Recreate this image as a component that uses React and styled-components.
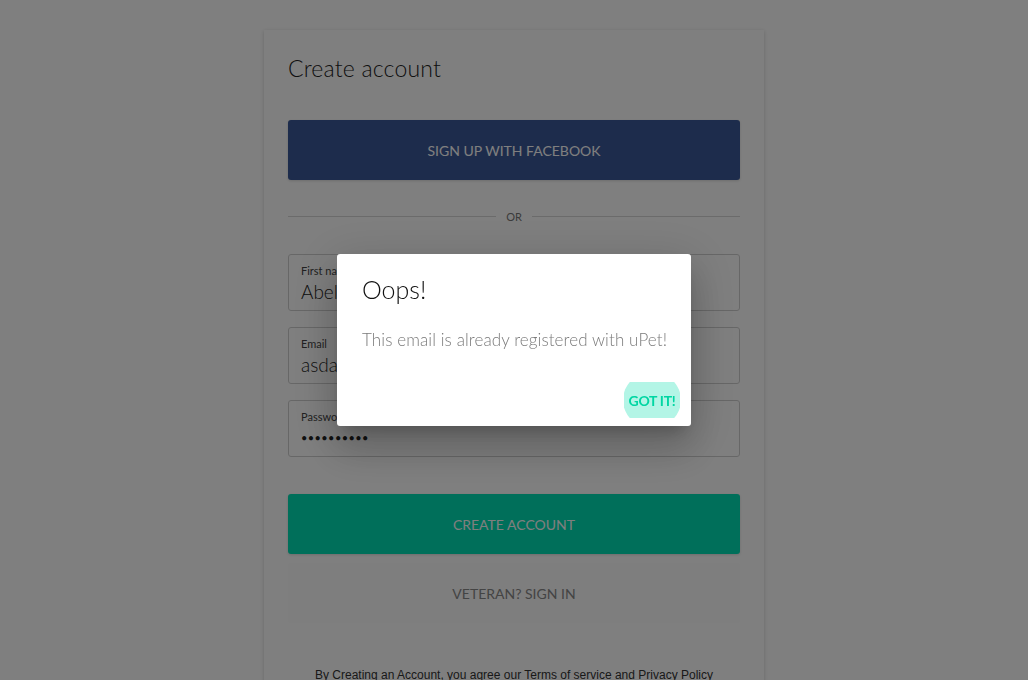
import React from 'react'
import styled, { createGlobalStyle } from 'styled-components'

const GlobalStyle = createGlobalStyle`
  html, body {
    margin: 0;
    padding: 0;
    background: #ffffff;
    font-family: Lato, "Open Sans", sans-serif;
  }
  * { box-sizing: border-box; }
`

const Page = styled.div`
  min-height: 680px;
  padding-top: 30px;
`

const Card = styled.section`
  width: 500px;
  margin: 0 auto;
  padding: 24px 24px 0;
  background: #ffffff;
  box-shadow: 0 1px 4px rgba(0, 0, 0, 0.18);
  min-height: 660px;
`

const Title = styled.h2`
  margin: 0 0 38px;
  font-size: 23px;
  line-height: 28px;
  font-weight: 300;
  color: #222;
  letter-spacing: 0.2px;
`

const BigButton = styled.button`
  display: flex;
  align-items: center;
  justify-content: center;
  width: 100%;
  height: 60px;
  border: 0;
  border-radius: 3px;
  background: ${({ bg }) => bg || 'transparent'};
  color: ${({ fg }) => fg || '#fff'};
  font-family: Lato, sans-serif;
  font-size: 14px;
  font-weight: 400;
  margin-top: ${({ mt }) => mt || 0}px;
  box-shadow: ${({ flat }) => (flat ? 'none' : '0 1px 3px rgba(0,0,0,0.15)')};
`

const Divider = styled.div`
  display: flex;
  align-items: center;
  gap: 10px;
  margin: 29px 0 31px;
  height: 14px;
  font-size: 11px;
  color: #777;
  &::before, &::after {
    content: '';
    flex: 1;
    height: 1px;
    background: #d6d6d6;
  }
`

const Fields = styled.div`
  display: flex;
  flex-direction: column;
  gap: 16px;
`

const Field = styled.div`
  height: 57px;
  border: 1px solid #cfcfcf;
  border-radius: 3px;
  padding: 9px 12px 0;
  display: flex;
  flex-direction: column;
`

const Label = styled.span`
  font-size: 11px;
  line-height: 14px;
  color: #444;
`

const Value = styled.span`
  font-size: ${({ dots }) => (dots ? '11px' : '19px')};
  line-height: 28px;
  color: #222;
  font-weight: ${({ dots }) => (dots ? 400 : 300)};
  letter-spacing: ${({ dots }) => (dots ? '0.4px' : '0')};
`

const Terms = styled.p`
  margin: 45px 0 0;
  text-align: center;
  font-family: "Liberation Sans", Arial, sans-serif;
  font-size: 12px;
  color: #333;
`

const Overlay = styled.div`
  position: fixed;
  inset: 0;
  background: rgba(0, 0, 0, 0.5);
  display: flex;
  align-items: center;
  justify-content: center;
`

const Dialog = styled.div`
  width: 354px;
  height: 172px;
  background: #fff;
  border-radius: 3px;
  box-shadow: 0 11px 15px -7px rgba(0,0,0,0.2), 0 24px 38px 3px rgba(0,0,0,0.14), 0 9px 46px 8px rgba(0,0,0,0.12);
  padding: 20px 11px 8px 25px;
  display: flex;
  flex-direction: column;
`

const DialogTitle = styled.h3`
  margin: 0;
  font-size: 25px;
  line-height: 30px;
  font-weight: 300;
  color: #111;
`

const DialogText = styled.p`
  margin: 24px 0 0;
  font-size: 17px;
  line-height: 24px;
  font-weight: 300;
  color: #7a7a7a;
  letter-spacing: 0.1px;
`

const Actions = styled.div`
  margin-top: auto;
  display: flex;
  justify-content: flex-end;
`

const GotIt = styled.button`
  position: relative;
  overflow: hidden;
  height: 36px;
  width: 56px;
  border: 0;
  padding: 0;
  background: transparent;
  font-family: Lato, sans-serif;
  font-weight: 700;
  font-size: 14px;
  color: #00d6a3;
  letter-spacing: -0.3px;
  &::before {
    content: '';
    position: absolute;
    left: -1px;
    top: -10px;
    width: 58px;
    height: 56px;
    border-radius: 50%;
    background: #b3f5e6;
  }
  span {
    position: relative;
  }
`

export default function App() {
  return (
    <>
      <GlobalStyle />
      <Page>
        <Card>
          <Title>Create account</Title>
          <BigButton bg="#3b5998" fg="#fff">SIGN UP WITH FACEBOOK</BigButton>
          <Divider>OR</Divider>
          <Fields>
            <Field>
              <Label>First name</Label>
              <Value>Abel</Value>
            </Field>
            <Field>
              <Label>Email</Label>
              <Value>asdasd@asd.com</Value>
            </Field>
            <Field>
              <Label>Password</Label>
              <Value dots>••••••••••</Value>
            </Field>
          </Fields>
          <BigButton bg="#00deb4" fg="#fff" mt={37}>CREATE ACCOUNT</BigButton>
          <BigButton bg="#fcfcfc" fg="#888" mt={9} flat>VETERAN? SIGN IN</BigButton>
          <Terms>By Creating an Account, you agree our Terms of service and Privacy Policy</Terms>
        </Card>
      </Page>
      <Overlay>
        <Dialog>
          <DialogTitle>Oops!</DialogTitle>
          <DialogText>This email is already registered with uPet!</DialogText>
          <Actions>
            <GotIt><span>GOT IT!</span></GotIt>
          </Actions>
        </Dialog>
      </Overlay>
    </>
  )
}
